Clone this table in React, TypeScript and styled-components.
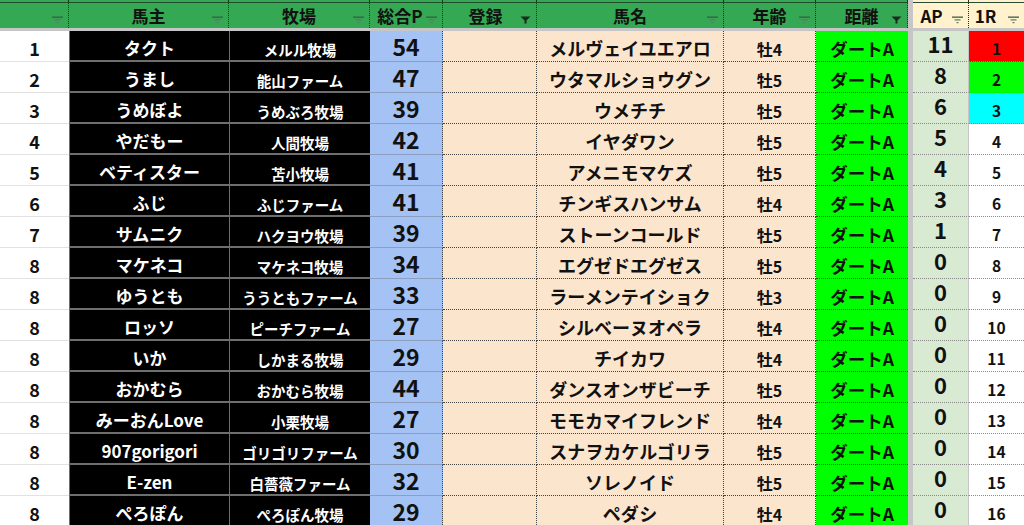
import React from "react";
import styled, { createGlobalStyle, css } from "styled-components";

const GlobalStyle = createGlobalStyle`
  html, body { margin: 0; padding: 0; background: #ffffff; overflow: hidden; }
  body { font-family: "Noto Sans CJK JP", "Noto Sans", sans-serif; }
`;

const COLS = "69px 160px 141px 73px 94px 187px 92px 92px 5px 56px 1fr";

type Row = {
  rank: number;
  owner: string;
  farm: string;
  total: number;
  horse: string;
  age: string;
  ap: number;
  r1: number;
};

const rows: Row[] = [
  { rank: 1, owner: "タクト", farm: "メルル牧場", total: 54, horse: "メルヴェイユエアロ", age: "牡4", ap: 11, r1: 1 },
  { rank: 2, owner: "うまし", farm: "能山ファーム", total: 47, horse: "ウタマルショウグン", age: "牡5", ap: 8, r1: 2 },
  { rank: 3, owner: "うめぼよ", farm: "うめぶろ牧場", total: 39, horse: "ウメチチ", age: "牡5", ap: 6, r1: 3 },
  { rank: 4, owner: "やだもー", farm: "人間牧場", total: 42, horse: "イヤダワン", age: "牡5", ap: 5, r1: 4 },
  { rank: 5, owner: "ベティスター", farm: "苫小牧場", total: 41, horse: "アメニモマケズ", age: "牡5", ap: 4, r1: 5 },
  { rank: 6, owner: "ふじ", farm: "ふじファーム", total: 41, horse: "チンギスハンサム", age: "牡4", ap: 3, r1: 6 },
  { rank: 7, owner: "サムニク", farm: "ハクヨウ牧場", total: 39, horse: "ストーンコールド", age: "牡5", ap: 1, r1: 7 },
  { rank: 8, owner: "マケネコ", farm: "マケネコ牧場", total: 34, horse: "エグゼドエグゼス", age: "牡5", ap: 0, r1: 8 },
  { rank: 8, owner: "ゆうとも", farm: "ううともファーム", total: 33, horse: "ラーメンテイショク", age: "牡3", ap: 0, r1: 9 },
  { rank: 8, owner: "ロッソ", farm: "ピーチファーム", total: 27, horse: "シルベーヌオペラ", age: "牡4", ap: 0, r1: 10 },
  { rank: 8, owner: "いか", farm: "しかまる牧場", total: 29, horse: "チイカワ", age: "牡4", ap: 0, r1: 11 },
  { rank: 8, owner: "おかむら", farm: "おかむら牧場", total: 44, horse: "ダンスオンザビーチ", age: "牡5", ap: 0, r1: 12 },
  { rank: 8, owner: "みーおんLove", farm: "小栗牧場", total: 27, horse: "モモカマイフレンド", age: "牡4", ap: 0, r1: 13 },
  { rank: 8, owner: "907gorigori", farm: "ゴリゴリファーム", total: 30, horse: "スナヲカケルゴリラ", age: "牡5", ap: 0, r1: 14 },
  { rank: 8, owner: "E-zen", farm: "白薔薇ファーム", total: 32, horse: "ソレノイド", age: "牡5", ap: 0, r1: 15 },
  { rank: 8, owner: "ぺろぽん", farm: "ぺろぽん牧場", total: 29, horse: "ペダシ", age: "牡4", ap: 0, r1: 16 },
];

const r1Colors: Record<number, string> = { 1: "#ff0000", 2: "#00ff00", 3: "#00ffff" };

const Sheet = styled.div`
  width: 1024px;
  height: 525px;
  overflow: hidden;
  display: flex;
  flex-direction: column;
`;

const HeaderRow = styled.div`
  display: grid;
  grid-template-columns: ${COLS};
  height: 31px;
  flex: none;
  border-bottom: 3px solid #c6c6c6;
  box-sizing: border-box;
`;

const HeaderCell = styled.div<{ $cream?: boolean; $last?: boolean; $shift?: number }>`
  position: relative;
  display: flex;
  align-items: center;
  justify-content: center;
  box-sizing: border-box;
  padding-top: 2px;
  padding-right: ${(p) => p.$shift ?? 0}px;
  font-size: 17px;
  font-weight: 700;
  color: #111;
  background: ${(p) =>
    p.$cream
      ? "linear-gradient(#fff2cc 0 2px, #2b4a32 2px 3px, #fff2cc 3px)"
      : "linear-gradient(#34a853 0 2px, #1f4d2b 2px 3px, #34a853 3px)"};
  border-right: ${(p) => (p.$last ? "none" : "1px dotted #1f2f22")};
`;

const Divider = styled.div`
  background: #c6c6c6;
`;

const FilterMark = styled.svg`
  position: absolute;
  right: 5px;
  top: 16px;
  width: 11px;
  height: 8px;
`;

const DataRow = styled.div`
  display: grid;
  grid-template-columns: ${COLS};
  height: 31px;
  flex: none;
`;

const base = css`
  display: flex;
  align-items: flex-end;
  justify-content: center;
  box-sizing: border-box;
  font-weight: 700;
  white-space: nowrap;
  line-height: 1;
`;

const RankCell = styled.div`
  ${base};
  background: #fff;
  color: #111;
  font-size: 18px;
  padding-bottom: 4px;
  border-bottom: 1px solid #e2e2e2;
`;

const DarkCell = styled.div<{ $small?: boolean }>`
  ${base};
  background: #000;
  color: #fff;
  font-size: ${(p) => (p.$small ? "14.5px" : "17px")};
  padding-bottom: ${(p) => (p.$small ? "3px" : "4px")};
  border-bottom: 2px solid #6e6e6e;
  border-left: 1px solid #6e6e6e;
`;

const TotalCell = styled.div`
  ${base};
  background: #a4c2f4;
  color: #111;
  font-size: 23px;
  padding-bottom: 3px;
  border-bottom: 1px solid #8c9fc0;
  border-right: 1px dotted #444;
`;

const PeachCell = styled.div<{ $size?: number }>`
  ${base};
  background: #fce5cd;
  color: #111;
  font-size: ${(p) => p.$size ?? 18}px;
  padding-bottom: 4px;
  border-bottom: 1px dotted #444;
  border-right: 1px dotted #444;
`;

const DistCell = styled.div`
  ${base};
  background: #00ff00;
  color: #111;
  font-size: 17.5px;
  padding-bottom: 4px;
  border-bottom: 1px dotted #444;
`;

const ApCell = styled.div`
  ${base};
  background: #d9ead3;
  color: #111;
  font-size: 22px;
  padding-bottom: 7px;
  border-bottom: 1px dotted #8a8a8a;
  border-right: 1px solid #c6c6c6;
`;

const RoundCell = styled.div`
  ${base};
  color: #111;
  font-size: 15.5px;
  padding-bottom: 5px;
  border-bottom: 1px dotted #8a8a8a;
`;

const Filter = ({ active }: { active?: boolean }) =>
  active ? (
    <FilterMark viewBox="0 0 11 8">
      <path d="M0.5 0.5 H10.5 L6.5 4.5 V7.5 H4.5 V4.5 Z" fill="#1a2a1d" />
    </FilterMark>
  ) : (
    <FilterMark viewBox="0 0 11 8">
      <rect x="0" y="0.5" width="11" height="1.3" fill="#3d5c44" />
      <rect x="2.5" y="3.3" width="6" height="1.2" fill="#5c7a62" />
      <rect x="4.5" y="6" width="2" height="1.2" fill="#5c7a62" />
    </FilterMark>
  );

const headers: { label: string; active?: boolean; shift?: number }[] = [
  { label: "" },
  { label: "馬主" },
  { label: "牧場" },
  { label: "総合P", shift: 12 },
  { label: "登録", active: true, shift: 8 },
  { label: "馬名" },
  { label: "年齢" },
  { label: "距離", active: true },
];

export default function App() {
  return (
    <>
      <GlobalStyle />
      <Sheet>
        <HeaderRow>
          {headers.map((h, i) => (
            <HeaderCell key={i} $shift={h.shift}>
              {h.label}
              <Filter active={h.active} />
            </HeaderCell>
          ))}
          <Divider />
          <HeaderCell $cream $shift={18}>
            AP
            <Filter />
          </HeaderCell>
          <HeaderCell $cream $last $shift={22}>
            1R
            <Filter />
          </HeaderCell>
        </HeaderRow>
        {rows.map((r, i) => (
          <DataRow key={i}>
            <RankCell>{r.rank}</RankCell>
            <DarkCell>{r.owner}</DarkCell>
            <DarkCell $small>{r.farm}</DarkCell>
            <TotalCell>{r.total}</TotalCell>
            <PeachCell />
            <PeachCell>{r.horse}</PeachCell>
            <PeachCell $size={16}>{r.age}</PeachCell>
            <DistCell>ダートA</DistCell>
            <Divider />
            <ApCell>{r.ap}</ApCell>
            <RoundCell style={{ background: r1Colors[r.r1] ?? "#ffffff" }}>{r.r1}</RoundCell>
          </DataRow>
        ))}
      </Sheet>
    </>
  );
}
